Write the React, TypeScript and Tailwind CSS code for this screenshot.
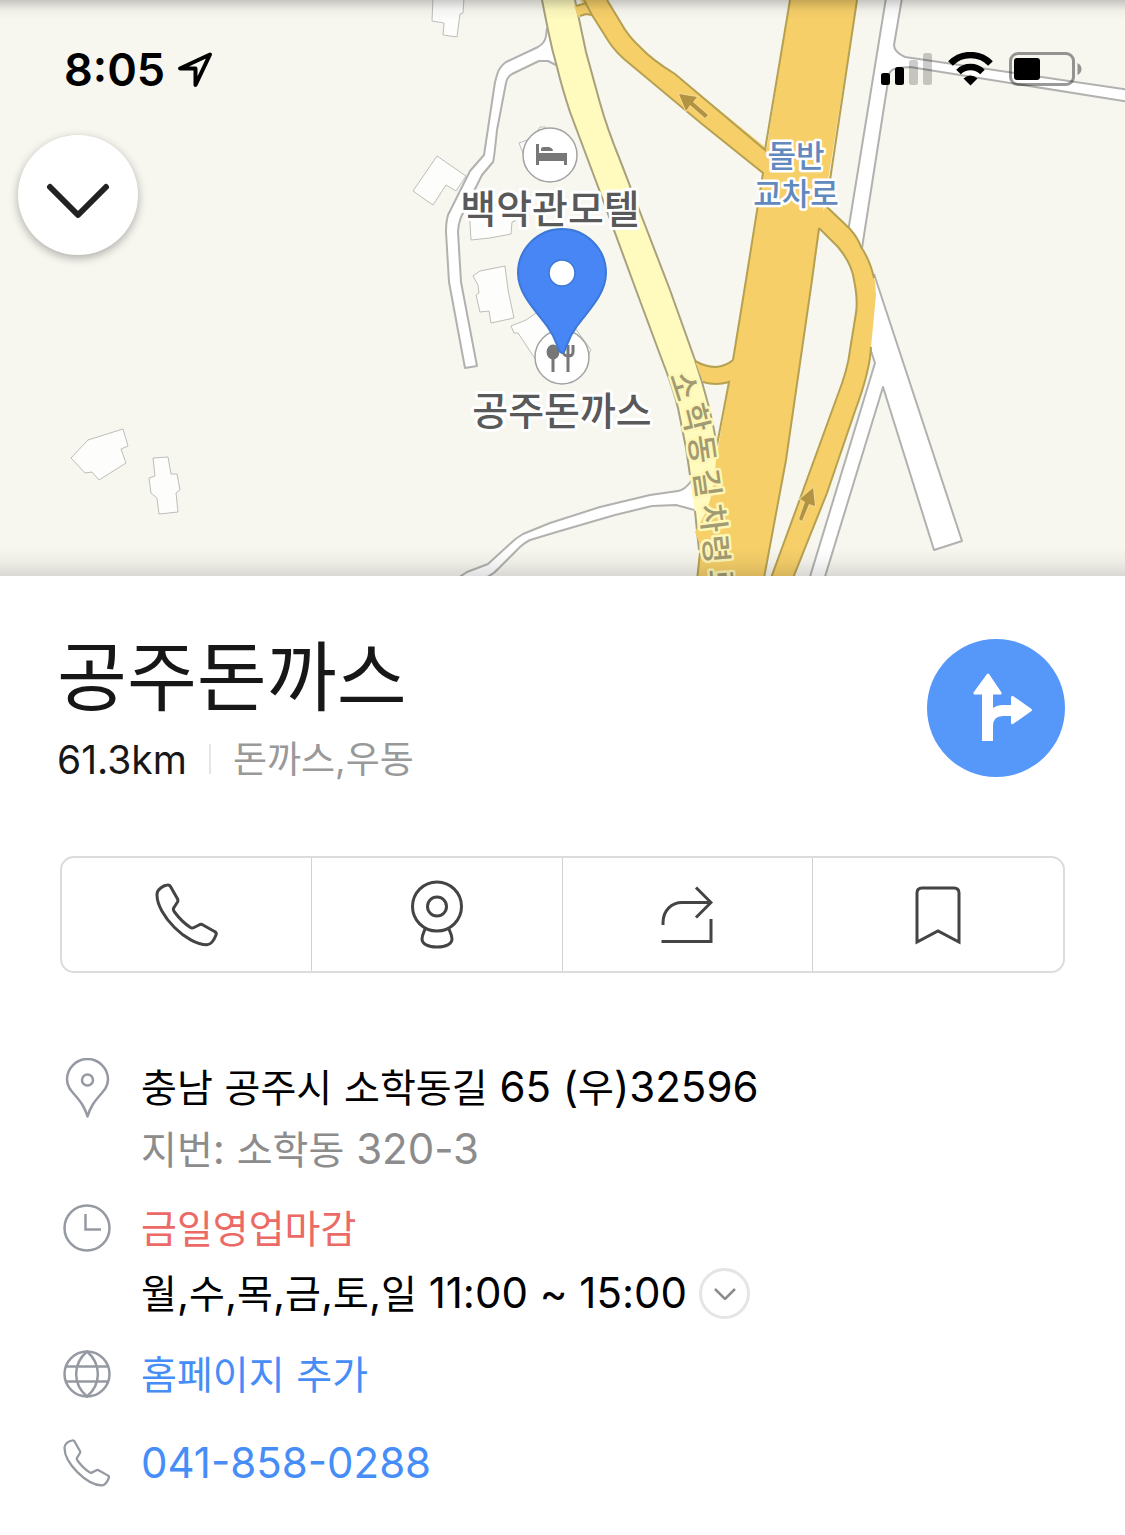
import type { ReactNode } from "react"

const ROAD_LABEL = [
  { char: "소", x: 684, y: 386, angle: 72 },
  { char: "학", x: 695, y: 418, angle: 76 },
  { char: "동", x: 702, y: 449, angle: 82 },
  { char: "길", x: 707, y: 483, angle: 82 },
  { char: "차", x: 713, y: 518, angle: 83 },
  { char: "령", x: 716, y: 549, angle: 85 },
  { char: "로", x: 721, y: 583, angle: 85 },
]

const BUILDINGS = [
  "433,-2 432,21 444,23 443,35 457,37 460,14 463,13 464,-2",
  "437,156 466,176 456,191 446,185 433,205 413,191",
  "469,205 471,240 490,238 511,234 512,222 515,221 515,205",
  "473,276 480,271 505,266 508,290 514,318 491,323 489,311 480,312 476,295 479,293 478,285",
  "511,326 526,320 536,313 560,320 575,328 591,350 585,360 536,360 518,333 514,333",
  "519,143 533,138 540,127 545,127 560,140 540,160 525,158",
  "71,458 88,440 123,429 128,446 121,449 126,463 99,480 92,472 85,473",
  "153,458 168,457 171,474 177,474 180,490 176,493 178,512 159,514 157,498 151,493 149,478 155,476",
]

function MapView() {
  return (
    <svg
      className="absolute inset-0 h-full w-full font-['Noto_Sans_CJK_KR',sans-serif]"
      viewBox="0 0 1125 576"
      preserveAspectRatio="xMidYMin slice"
      aria-label="지도"
    >
      <rect width="1125" height="576" fill="#f7f6ef" />
      {BUILDINGS.map((points) => (
        <polygon key={points} points={points} fill="#fdfdfc" stroke="#bdbdbb" strokeWidth="1" />
      ))}

      {/* side streets */}
      <g fill="#fff" stroke="#b1b1af" strokeWidth="2" strokeLinejoin="round">
        <path d="M547 28L546 36Q545 43 538 47L506 62Q499 67 497 75L495 82L484 155L470 171L448 215Q446 222 446 232L449 282L465 368L477 366L461 282L458 232Q458 225 461 217L482 175L493 162Q494 160 497 130L506 83Q507 77 512 74L539 61H548L558 66" />
        <path d="M692 480Q685 490 678 491L650 495L600 507L550 523L523 534Q516 538 511 543L488 564L467 572L455 580L480 580Q492 576 498 569L520 547Q524 543 530 540L560 531L615 515L652 506L676 505L698 511" />
        <path d="M886 -2L848 232L862 248L889 75Q890 69 898 68L910 67L1130 102V90L905 57Q894 52 894 45L902 -2" />
        <path d="M874 274L875 277L962 541L934 550L883 387L824 580L809 580L875 363L868 342" />
      </g>

      {/* local road */}
      <path
        d="M542 0L548 30Q552 50 557 67Q562 88 570 112L600 192L636 290L662 360Q673 388 678 408L686 448L690 475L694 505L697 531L700 576H740L719 455Q711 408 695 360L670 290L645 225L620 160Q607 128 600 103L586 52L575 0Z"
        fill="#fffabe"
      />
      <path
        d="M542 0L548 30Q552 50 557 67Q562 88 570 112L600 192L636 290L662 360Q673 388 678 408L686 448L690 475M695 511L697 531L699 550M575 0L586 52L600 103Q607 128 620 160L645 225L670 290L695 360Q711 408 717 446"
        fill="none"
        stroke="#a7a17d"
        strokeWidth="2"
      />

      {/* highway with ramps */}
      <g fill="#f6cf69">
        <path d="M574 5L588 2L594 17L585 14L578 17Z" />
        <path d="M580 0H607L621 23Q628 36 640 47Q652 60 675 74L770 151V179L630 64Q617 54 609 42L592 15Z" />
        <path d="M695 361Q706 367 716 367Q726 366 733 360L740 360L735 382H729Q716 386 703 382Z" />
        <path d="M790 0H857L812 280L786 460L764 576H697L700 545L695 532L707 510Q714 490 716 460L733 360L746 280Z" />
        <path d="M826 206L850 229Q858 238 861 247Q876 269 876 295L871 347Q870 371 855 411L827 493L793 578H771L797 507L837 397Q848 369 850 350L856 313Q858 299 854 280Q852 264 838 247L815 224Z" />
      </g>
      <g fill="none" stroke="#b6a151" strokeWidth="2">
        <path d="M576 6L587 3M580 16L586 14L592 15M584 0L592 15L609 42Q617 54 630 64L702 124L763 173L746 280L733 360M607 0L621 23Q628 36 640 47Q652 60 675 74L765 150L790 0" />
        <path d="M695 361Q706 367 716 367Q726 366 733 360M703 382Q716 386 729 382L717 445M697 580L700 553" />
        <path d="M857 0L827 200M819 228L812 280L786 460L764 578M827 207L850 229Q858 238 861 247Q870 260 874 278M871 347Q870 371 855 411L827 493L793 578M771 578L797 507L837 397Q848 369 850 350L856 313Q858 299 854 280Q852 264 838 247L819 228" />
      </g>

      {/* one-way arrows */}
      <g fill="#b29343" stroke="#f4d98f" strokeWidth="2" paintOrder="stroke">
        <path d="M679 94L697 97L693 102L708 115L705 118L690 105L686 111Z" />
        <path d="M813 488L815 506L809 504L802 521L799 519L805 502L800 499Z" />
      </g>

      <g fontSize="31" fontWeight="500" fill="#a19a72" stroke="#fdf6b4" strokeWidth="5" strokeLinejoin="round" paintOrder="stroke" textAnchor="middle">
        {ROAD_LABEL.map(({ char, x, y, angle }) => (
          <text key={char} x={x} y={y + 11} transform={`rotate(${angle} ${x} ${y})`}>
            {char}
          </text>
        ))}
      </g>

      {/* motel marker */}
      <circle cx="550" cy="155" r="27" fill="#fff" stroke="#a3a3a3" strokeWidth="1.5" />
      <path d="M536 144H539V153H567V165H564V161H539V165H536ZM541 151V149Q541 147 544 147H549Q553 148 553 151Z" fill="#777" />

      {/* restaurant marker */}
      <circle cx="562" cy="357" r="27" fill="#fff" stroke="#a3a3a3" strokeWidth="1.5" />
      <ellipse cx="553" cy="352" rx="6.5" ry="7.5" fill="#777" />
      <path d="M553 355V372M568 345V372M563 345V352Q564 356 568 356Q573 356 573 352V345" fill="none" stroke="#777" strokeWidth="3" />

      <g textAnchor="middle" stroke="#fff" strokeLinejoin="round" paintOrder="stroke" fontWeight="500">
        <g fontSize="39" fill="#595959" strokeWidth="6">
          <text x="550" y="223">백악관모텔</text>
          <text x="562" y="425">공주돈까스</text>
        </g>
        <text fontSize="31" fill="#6189bd" strokeWidth="5">
          <tspan x="796" y="167">돌반</tspan>
          <tspan x="796" y="205">교차로</tspan>
        </text>
      </g>

      <path
        d="M518 273a44 44 0 0 1 88 0c0 22-20 40-29 53c-8 11-9 16-12 24q-3 6-6 0c-3-8-4-13-12-24c-9-13-29-31-29-53Z"
        fill="#4886f5"
        stroke="#3b78d8"
        strokeWidth="2"
      />
      <circle cx="562" cy="273" r="13" fill="#fff" stroke="#3b78d8" strokeWidth="1.5" />
    </svg>
  )
}

function StatusBar() {
  return (
    <div className="flex h-[135px] items-center justify-between pt-1 pr-[43px] pl-16">
      <div className="flex items-center gap-3">
        <span className="text-[45px] leading-none font-semibold text-black">8:05</span>
        <svg className="h-9 w-9" viewBox="0 0 36 36" fill="none" stroke="#000" strokeWidth="4" strokeLinejoin="round">
          <path d="M33 2.500L3 16.500H18.500V33Z" />
        </svg>
      </div>
      <div className="flex items-center gap-4">
        <svg className="h-9 w-[51px]" viewBox="0 0 51 36">
          <rect x="0" y="21" width="9" height="12" rx="2.500" />
          <rect x="14" y="15" width="9" height="18" rx="2.500" />
          <rect x="28" y="8" width="9" height="25" rx="2.500" fillOpacity="0.2" />
          <rect x="42" y="1" width="9" height="32" rx="2.500" fillOpacity="0.2" />
        </svg>
        <svg className="h-9 w-[45px]" viewBox="0 0 45 36">
          <path d="M2.500 11.500A28 28 0 0 1 42.500 11.500M10.500 20A17 17 0 0 1 34.500 20" fill="none" stroke="#000" strokeWidth="6.500" />
          <path d="M15.500 26.500Q22.500 20.500 29.500 26.500L22.500 33.500Z" />
        </svg>
        <svg className="h-9 w-[73px]" viewBox="0 0 73 36">
          <rect x="1.500" y="1.500" width="63" height="31" rx="7.500" fill="none" stroke="#000" strokeOpacity="0.4" strokeWidth="3" />
          <rect x="5" y="6" width="26" height="22" rx="3" />
          <path d="M68.500 11Q72.500 13 72.500 17T68.500 23Z" fillOpacity="0.4" />
        </svg>
      </div>
    </div>
  )
}

function PhoneIcon({ className, strokeWidth }: { className: string; strokeWidth: number }) {
  return (
    <svg className={className} viewBox="0 0 64 64" fill="none" stroke="currentColor" strokeWidth={strokeWidth} strokeLinejoin="round">
      <path d="M2 12C1.500 6 9 2.500 12 2Q14.500 1.500 15.500 3.500L22 15Q23.500 17 22.500 19L19 24.500Q17.500 26.500 19.500 29C24 35 30 41 35.500 44.500Q37 45.500 39 44.500L44 42Q46 40.500 48 42L59.500 48.500Q62 49.500 61 52C59.500 56 57 61.500 52 61.800C32 62 2 32 2 12Z" />
    </svg>
  )
}

function WebcamIcon() {
  return (
    <svg className="h-[70px] w-[52px]" viewBox="0 0 52 70" fill="none" stroke="currentColor" strokeWidth="3">
      <circle cx="26" cy="26.500" r="24.500" />
      <circle cx="26" cy="26.500" r="9.500" />
      <path d="M14.500 48C13 52 11 55 11 59C11 64 17 67 26 67S41 64 41 59C41 55 39 52 37.500 48" />
    </svg>
  )
}

function ShareIcon() {
  return (
    <svg className="h-[58px] w-[52px]" viewBox="0 0 52 58" fill="none" stroke="currentColor" strokeWidth="3">
      <path d="M2 39V37C2 24 11 16.500 21 16.500H50M35 1.500L50 16.500L35 31.500M.5 55.500H50V33" />
    </svg>
  )
}

function BookmarkIcon() {
  return (
    <svg className="h-[60px] w-[46px]" viewBox="0 0 46 60" fill="none" stroke="currentColor" strokeWidth="3">
      <path d="M2 57V8Q2 3 7 3H39Q44 3 44 8V57L23 46Z" />
    </svg>
  )
}

function PinIcon() {
  return (
    <svg className="h-[60px] w-12" viewBox="0 0 48 60" fill="none" stroke="currentColor" strokeWidth="2.500" strokeLinejoin="round">
      <path d="M4 21.500A20.500 20.500 0 0 1 45 21.500C45 32 36 36 29.500 47C26.500 52 25.500 55 24.500 58.500C23.500 55 22.500 52 19.500 47C13 36 4 32 4 21.500Z" />
      <circle cx="24.500" cy="22" r="5.500" />
    </svg>
  )
}

function ClockIcon() {
  return (
    <svg className="h-12 w-12" viewBox="0 0 48 48" fill="none" stroke="currentColor" strokeWidth="2.500">
      <circle cx="24" cy="24" r="22.500" />
      <path d="M22.500 10V25.500H38" />
    </svg>
  )
}

function GlobeIcon() {
  return (
    <svg className="h-12 w-12" viewBox="0 0 48 48" fill="none" stroke="currentColor" strokeWidth="2.500">
      <circle cx="24" cy="24" r="22.500" />
      <path d="M24 1.500C9.500 14 9.500 34 24 46.500C38.500 34 38.500 14 24 1.500ZM3 16.500H45M3 31.500H45" />
    </svg>
  )
}

// Hangul is set a little smaller than the latin digits and punctuation around it
function Mixed({ text }: { text: string }) {
  return text.split(/([가-힣]+)/).map((part, i) =>
    i % 2 === 1 ? (
      <span key={i} className="text-[39px]">
        {part}
      </span>
    ) : (
      part
    ),
  )
}

function ActionButton({ label, children }: { label: string; children: ReactNode }) {
  return (
    <button type="button" aria-label={label} className="flex items-center justify-center">
      {children}
    </button>
  )
}

function InfoRow({ icon, className, children }: { icon: ReactNode; className?: string; children: ReactNode }) {
  return (
    <li className={`flex items-start gap-[30px] ${className ?? ""}`}>
      <div className="flex h-16 w-12 shrink-0 items-center justify-center text-[#9599a1]">{icon}</div>
      <div>{children}</div>
    </li>
  )
}

export default function App() {
  return (
    <div className="min-h-screen bg-white font-['Inter','Noto_Sans_CJK_KR',sans-serif]">
      <header className="relative h-[576px] overflow-hidden">
        <MapView />
        <div className="absolute inset-x-0 top-0 h-5 bg-gradient-to-b from-black/20 via-black/4 to-transparent" />
        <div className="absolute inset-x-0 bottom-0 h-7 bg-gradient-to-t from-black/12 via-black/4 to-transparent" />
        <div className="relative">
          <StatusBar />
          <button
            type="button"
            aria-label="닫기"
            className="ml-[18px] flex h-[120px] w-[120px] items-center justify-center rounded-full bg-white pt-3 shadow-[0_3px_10px_rgba(0,0,0,0.3)]"
          >
            <svg className="h-9 w-16" viewBox="0 0 64 36" fill="none" stroke="#222" strokeWidth="6" strokeLinecap="round" strokeLinejoin="round">
              <path d="M4 4L32 32L60 4" />
            </svg>
          </button>
        </div>
      </header>

      <main className="px-[60px] pt-[63px] pb-8">
        <div className="flex items-start justify-between">
          <div>
            <h1 className="-ml-[3px] text-[76px] leading-[76px] text-[#171717]">공주돈까스</h1>
            <div className="-ml-[3px] flex h-[88px] items-center">
              <span className="text-[39px] leading-none text-[#171717]">61.3km</span>
              <span className="mx-[22px] h-[30px] w-[2px] bg-[#e5e5e5]" />
              <span className="text-[37px] leading-none text-[#999]">돈까스,우동</span>
            </div>
          </div>
          <button
            type="button"
            aria-label="길찾기"
            className="flex h-[138px] w-[138px] shrink-0 items-center justify-center rounded-full bg-[#5698f9]"
          >
            <svg className="h-[138px] w-[138px]" viewBox="0 0 138 138" fill="#fff">
              <path d="M60 35Q61 34 62 35L74.500 53.500Q75 55.500 73.500 55.500H66V69Q70 66 76 66H84V58.500Q84 56.500 86 57L104.500 70Q105.500 71 104.500 72L86 85Q84 86 84 83.500V77H76Q66 77 66 87V102H55V55.500H48Q46 55.500 46.500 53.500Z" />
            </svg>
          </button>
        </div>

        <div className="mt-[53px] grid h-[117px] grid-cols-4 divide-x divide-[#d2d2d2] rounded-[14px] border-2 border-[#dcdcdc] text-[#444]">
          <ActionButton label="전화">
            <PhoneIcon className="h-16 w-16" strokeWidth={3} />
          </ActionButton>
          <ActionButton label="로드뷰">
            <WebcamIcon />
          </ActionButton>
          <ActionButton label="공유">
            <ShareIcon />
          </ActionButton>
          <ActionButton label="저장">
            <BookmarkIcon />
          </ActionButton>
        </div>

        <ul className="mt-[83px] pl-[3px] text-[42px] leading-16 text-black">
          <InfoRow icon={<PinIcon />}>
            <p className="leading-[61px]">
              <Mixed text="충남 공주시 소학동길 65 (우)32596" />
            </p>
            <p className="leading-[61px] text-[#8c8c8c]">
              <Mixed text="지번: 소학동 320-3" />
            </p>
          </InfoRow>
          <InfoRow icon={<ClockIcon />} className="mt-4">
            <p className="text-[#ec6a66]">
              <Mixed text="금일영업마감" />
            </p>
            <div className="flex items-center gap-3">
              <p>
                <Mixed text="월,수,목,금,토,일 11:00 ~ 15:00" />
              </p>
              <button
                type="button"
                aria-label="영업시간 더보기"
                className="flex h-[51px] w-[51px] items-center justify-center rounded-full border-3 border-[#e5e5e5]"
              >
                <svg className="h-3 w-6" viewBox="0 0 24 12" fill="none" stroke="#8c8c8c" strokeWidth="2.500">
                  <path d="M2 1L12 11L22 1" />
                </svg>
              </button>
            </div>
          </InfoRow>
          <InfoRow icon={<GlobeIcon />} className="mt-4">
            <a href="#homepage" className="text-[#468df7]">
              <Mixed text="홈페이지 추가" />
            </a>
          </InfoRow>
          <InfoRow icon={<PhoneIcon className="h-12 w-12" strokeWidth={3} />} className="mt-6">
            <a href="tel:041-858-0288" className="text-[#468df7]">
              041-858-0288
            </a>
          </InfoRow>
        </ul>
      </main>
    </div>
  )
}
